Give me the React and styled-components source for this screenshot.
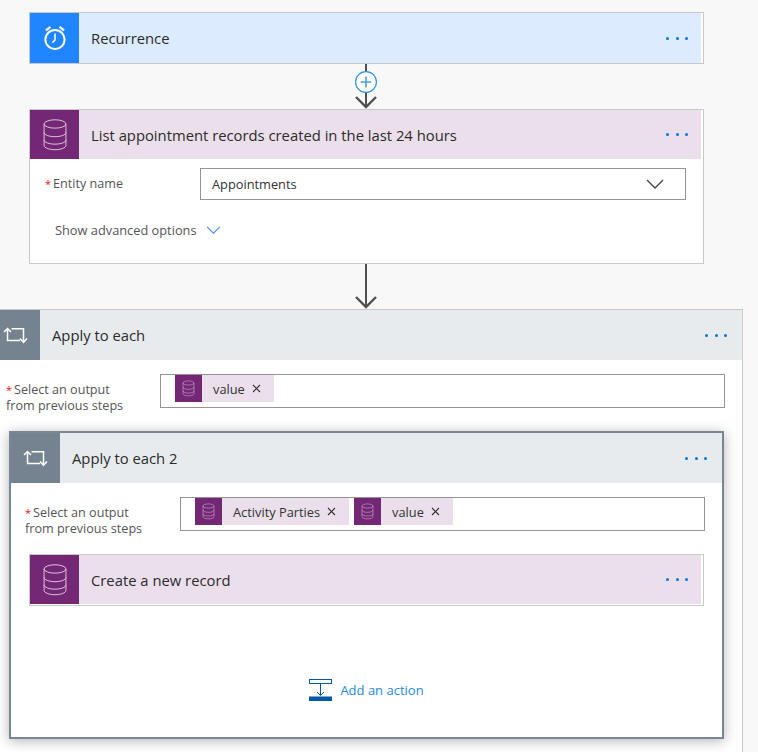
import React from "react";
import styled, { createGlobalStyle } from "styled-components";

const GlobalStyle = createGlobalStyle`
  html, body {
    margin: 0;
    padding: 0;
    background: #f8f8f8;
  }
  body {
    font-family: "Open Sans", "Noto Sans", "Liberation Sans", sans-serif;
    color: #333;
  }
`;

const CLOCK_BLUE = "#1f86ff";
const PURPLE = "#742774";
const SLATE = "#75828f";

const ClockIcon = () => (
  <svg width="26" height="28" viewBox="0 0 26 28" fill="none" stroke="#fff">
    <circle cx="13" cy="15.5" r="9.6" strokeWidth="2" />
    <path d="M13 9.5v6.5l-2.6 2.6" strokeWidth="1.5" />
    <path d="M3.6 5.6 7.6 2.4 9 3.6 4.8 7z" fill="#fff" strokeWidth="0.6" />
    <path d="M22.4 5.6 18.4 2.4 17 3.6 21.2 7z" fill="#fff" strokeWidth="0.6" />
  </svg>
);

const DbIcon = ({ size = 26 }) => (
  <svg width={size} height={size * 1.3} viewBox="0 0 26 34" fill="none" stroke="#dcc4dc" strokeWidth="1">
    <ellipse cx="13" cy="6" rx="11" ry="4.2" />
    <path d="M2 6v21.5c0 2.5 5 4.4 11 4.4s11-1.9 11-4.4V6" />
    <path d="M2 14.5c0 2.5 5 4.3 11 4.3s11-1.8 11-4.3" />
    <path d="M2 22c0 2.5 5 4.3 11 4.3s11-1.8 11-4.3" />
  </svg>
);

const LoopIcon = () => (
  <svg width="25" height="17" viewBox="0 0 25 17" fill="none" stroke="#fff" strokeWidth="1.5">
    <path d="M1 5l3.5-3.5L8 5" />
    <path d="M4.5 2v11.5H17" />
    <path d="M8.5 1.8H20.5V15" />
    <path d="M17 11.5l3.5 3.8 3.5-3.8" />
  </svg>
);

const Chevron = ({ color, width, height }) => (
  <svg width={width} height={height} viewBox="0 0 18 10" fill="none" stroke={color} strokeWidth="1.3">
    <path d="M1 1l8 8 8-8" />
  </svg>
);

const Page = styled.div`
  height: 752px;
  width: 758px;
  overflow: hidden;
  padding-top: 12px;
  box-sizing: border-box;
`;

const StepColumn = styled.div`
  width: 675px;
  margin-left: 29px;
`;

const Card = styled.div`
  box-sizing: border-box;
  border: 1px solid #c8c8c8;
  background: #fff;
  padding-right: ${(p) => p.$gap || 0}px;
`;

const LoopCard = styled(Card)`
  width: 753px;
  margin-left: -10px;
  height: 500px;
`;

const InnerLoopCard = styled.div`
  box-sizing: border-box;
  width: 715px;
  margin: 17px 0 0 18px;
  border: 2px solid #78869a;
  background: #fff;
  box-shadow: 0 2px 12px rgba(0, 0, 0, 0.3);
  padding-bottom: 36px;
`;

const Header = styled.div`
  display: flex;
  align-items: center;
  height: ${(p) => p.$height}px;
  background: ${(p) => p.$tint};
`;

const IconBox = styled.div`
  flex: 0 0 49px;
  height: 100%;
  display: flex;
  align-items: center;
  justify-content: center;
  background: ${(p) => p.$color};
`;

const Title = styled.div`
  flex: 1;
  padding-left: 12px;
  font-size: 14.8px;
  color: #2c2c2c;
`;

const Dots = styled.div`
  display: flex;
  gap: 6.5px;
  margin-right: ${(p) => p.$inset}px;
`;

const Dot = styled.span`
  width: 3px;
  height: 3px;
  border-radius: 50%;
  background: #0078d7;
`;

const Connector = styled.div`
  display: flex;
  justify-content: center;
  height: 45px;
  padding-right: 1px;
`;

const FieldRow = styled.div`
  display: flex;
  align-items: ${(p) => p.$align || "flex-start"};
  padding: ${(p) => p.$top}px ${(p) => p.$right}px 0 ${(p) => p.$left}px;
`;

const Label = styled.div`
  flex: 0 0 ${(p) => p.$width}px;
  box-sizing: border-box;
  font-size: 12.6px;
  line-height: 16px;
  color: #555;
  padding-top: ${(p) => p.$top || 0}px;
`;

const Star = styled.span`
  color: #e81123;
  font-size: 11px;
  margin-right: 2px;
`;

const Select = styled.div`
  flex: 1;
  height: 32px;
  box-sizing: border-box;
  border: 1px solid #949494;
  display: flex;
  align-items: center;
  justify-content: space-between;
  padding: 0 21px 0 11px;
  font-size: 12.8px;
  color: #333;
`;

const TokenBox = styled.div`
  flex: 1;
  height: 34px;
  box-sizing: border-box;
  border: 1px solid #949494;
  display: flex;
  align-items: flex-start;
  gap: 5px;
  padding-left: 14px;
`;

const Token = styled.div`
  display: flex;
  align-items: center;
  height: 27px;
  background: #eadfeb;
  font-size: 12.8px;
  color: #333;
  padding-right: 13px;
`;

const TokenIcon = styled.div`
  width: 27px;
  height: 27px;
  background: ${PURPLE};
  display: flex;
  align-items: center;
  justify-content: center;
  margin-right: 11px;
`;

const TokenClose = styled.span`
  margin-left: 7px;
  display: inline-flex;
`;

const Advanced = styled.div`
  display: flex;
  align-items: center;
  gap: 9px;
  padding: 21px 0 24px 25px;
  font-size: 12.8px;
  color: #555;
`;

const NestedCard = styled(Card)`
  margin: 17px 18px 0 18px;
  padding-bottom: 1px;
`;

const AddAction = styled.div`
  display: flex;
  justify-content: center;
  align-items: center;
  gap: 8px;
  margin-top: 73px;
  font-size: 13px;
  color: #1e88e5;
`;

const StepHeader = ({ tint, color, icon, title, height = 50, inset = 15 }) => (
  <Header $tint={tint} $height={height}>
    <IconBox $color={color}>{icon}</IconBox>
    <Title>{title}</Title>
    <Dots $inset={inset}>
      <Dot />
      <Dot />
      <Dot />
    </Dots>
  </Header>
);

const DbToken = ({ label }) => (
  <Token>
    <TokenIcon>
      <DbIcon size={13} />
    </TokenIcon>
    {label}
    <TokenClose>
      <svg width="9" height="9" viewBox="0 0 9 9" stroke="#333" strokeWidth="1.1">
        <path d="M1 1l7 7M8 1l-7 7" />
      </svg>
    </TokenClose>
  </Token>
);

const OutputLabel = ({ width }) => (
  <Label $top={8} $width={width}>
    <Star>*</Star>Select an output
    <br />
    from previous steps
  </Label>
);

const Arrow = ({ plus }) => (
  <Connector>
    <svg width="26" height="45" viewBox="0 0 26 45" fill="none">
      <path d="M13 0v43" stroke="#505050" strokeWidth="2" />
      <path d="M3 33l10 10 10-10" stroke="#505050" strokeWidth="2.4" />
      {plus && (
        <g>
          <circle cx="13" cy="18" r="10.4" fill="#fff" stroke="#2f8fe6" strokeWidth="1.2" />
          <path d="M7.6 18h10.8M13 12.6v10.8" stroke="#4a9ee8" strokeWidth="1.6" />
        </g>
      )}
    </svg>
  </Connector>
);

export default function App() {
  return (
    <Page>
      <GlobalStyle />
      <StepColumn>
        <Card $gap={2}>
          <StepHeader tint="#dcebfe" color={CLOCK_BLUE} icon={<ClockIcon />} title="Recurrence" inset={13} />
        </Card>
        <Arrow plus />
        <Card $gap={2}>
          <StepHeader
            tint="#eadfeb"
            color={PURPLE}
            icon={<DbIcon />}
            title="List appointment records created in the last 24 hours"
            height={49}
            inset={13}
          />
          <FieldRow $top={9} $left={15} $right={15} $align="center">
            <Label $width={155}>
              <Star>*</Star>Entity name
            </Label>
            <Select>
              Appointments
              <Chevron color="#444" width={18} height={10} />
            </Select>
          </FieldRow>
          <Advanced>
            Show advanced options
            <Chevron color="#4a8fe0" width={15} height={8} />
          </Advanced>
        </Card>
        <Arrow />
      </StepColumn>
      <LoopCard>
        <StepHeader tint="#e8ebee" color={SLATE} icon={<LoopIcon />} title="Apply to each" />
        <FieldRow $top={14} $left={15} $right={17}>
          <OutputLabel width={154} />
          <TokenBox>
            <DbToken label="value" />
          </TokenBox>
        </FieldRow>
        <InnerLoopCard>
          <StepHeader tint="#e8ebee" color={SLATE} icon={<LoopIcon />} title="Apply to each 2" />
          <FieldRow $top={14} $left={14} $right={17}>
            <OutputLabel width={155} />
            <TokenBox>
              <DbToken label="Activity Parties" />
              <DbToken label="value" />
            </TokenBox>
          </FieldRow>
          <NestedCard $gap={2}>
            <StepHeader
              tint="#eadfeb"
              color={PURPLE}
              icon={<DbIcon />}
              title="Create a new record"
              height={49}
              inset={13}
            />
          </NestedCard>
          <AddAction>
            <svg width="23" height="22" viewBox="0 0 23 22" fill="none" stroke="#0058a8">
              <rect x="0.5" y="0.5" width="22" height="4" strokeWidth="1" />
              <path d="M11.5 5v11M8 13l3.5 3.5L15 13" strokeWidth="1" />
              <rect x="0" y="17.5" width="23" height="4.5" fill="#0058a8" stroke="none" />
            </svg>
            Add an action
          </AddAction>
        </InnerLoopCard>
      </LoopCard>
    </Page>
  );
}
